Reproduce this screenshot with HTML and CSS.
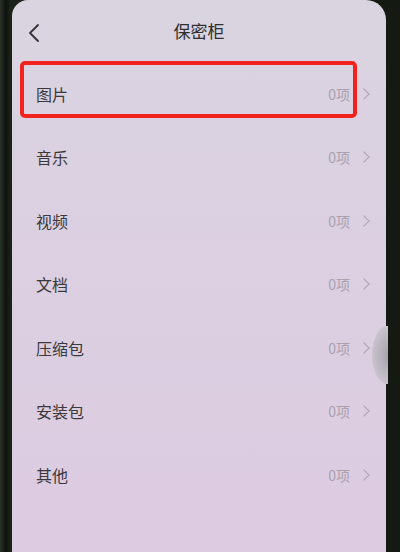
FILE: index.html
```html
<html lang="zh-CN">
  <head>
    <meta charset="UTF-8" />
    <meta name="viewport" content="width=device-width, initial-scale=1.0" />
    <title>保密柜</title>
    <link rel="stylesheet" href="styles.css">
  </head>
  <body>
    <div class="phone">
      <div class="screen">
        <header class="topbar">
          <svg class="back" width="14" height="20" viewBox="0 0 14 20">
            <path d="M11 2 L3 10 L11 18" fill="none" stroke="#333" stroke-width="1.8" stroke-linecap="round" stroke-linejoin="round" />
          </svg>
          <h1>保密柜</h1>
        </header>
        <ul class="list">
          <li class="row marked"><span>图片</span><span class="count">0项</span><i class="arrow"></i></li>
          <li class="row"><span>音乐</span><span class="count">0项</span><i class="arrow"></i></li>
          <li class="row"><span>视频</span><span class="count">0项</span><i class="arrow"></i></li>
          <li class="row"><span>文档</span><span class="count">0项</span><i class="arrow"></i></li>
          <li class="row"><span>压缩包</span><span class="count">0项</span><i class="arrow"></i></li>
          <li class="row"><span>安装包</span><span class="count">0项</span><i class="arrow"></i></li>
          <li class="row"><span>其他</span><span class="count">0项</span><i class="arrow"></i></li>
        </ul>
      </div>
      <div class="side_bump"></div>
    </div>
  </body>
</html>
```

FILE: styles.css
```css
body {
  margin: 0;
  background: #1c2419;
  font-family: "Noto Sans CJK SC", "Noto Sans", sans-serif;
  overflow: hidden;
}

.phone {
  position: relative;
  height: 552px;
  background: linear-gradient(90deg, #2a3327 0, #0d120c 6px, #1b2218 10px, #141a12 100%);
}

.screen {
  position: absolute;
  left: 12px;
  top: 0;
  width: 374px;
  height: 560px;
  border-radius: 16px 20px 0 0;
  background: linear-gradient(180deg, #dad4e0 0, #dbd0e1 40%, #ddcbe1 100%);
  color: #333;
}

.topbar {
  height: 62px;
  display: flex;
  align-items: center;
  justify-content: center;
  position: relative;
}

.back {
  position: absolute;
  left: 15px;
  top: 23px;
}

.topbar h1 {
  margin: 0 0 0 0;
  font-size: 17px;
  font-weight: 400;
  color: #2e2e2e;
  padding-bottom: 2px;
}

.list {
  list-style: none;
  margin: 0;
  padding: 0;
}

.row {
  position: relative;
  height: 63.5px;
  display: flex;
  align-items: center;
  padding: 0 18px 0 24px;
  font-size: 16px;
  color: #3a3a3c;
}

.row span:first-child {
  flex: 1;
}

.count {
  font-size: 14px;
  color: #a9a1ad;
}

.arrow {
  width: 7px;
  height: 7px;
  margin-left: 10px;
  border-top: 1.4px solid #aaa3ae;
  border-right: 1.4px solid #aaa3ae;
  transform: rotate(45deg);
}

.marked::after {
  content: "";
  position: absolute;
  left: 8px;
  top: -1px;
  width: 329px;
  height: 49px;
  border: 4px solid #f2231f;
  border-radius: 5px;
}

.side_bump {
  position: absolute;
  left: 372px;
  top: 326px;
  width: 16px;
  height: 58px;
  border-radius: 50% 0 0 50%;
  background: radial-gradient(ellipse at 100% 50%, #a8a2ac 0, #c9c3cd 70%, transparent 72%);
}
```
